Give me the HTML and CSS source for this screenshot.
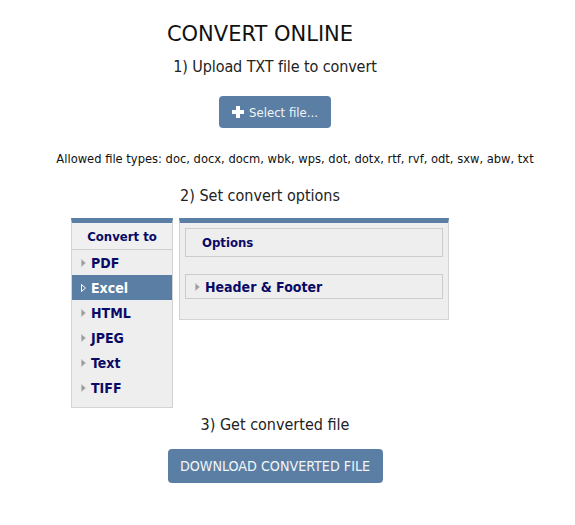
FILE: index.html
```html
<!DOCTYPE html>
<html>
<head>
<meta charset="utf-8">
<link rel="stylesheet" href="styles.css">
</head>
<body>
<main class="page">
  <h1 class="title">CONVERT ONLINE</h1>
  <p class="step step-1">1) Upload TXT file to convert</p>
  <button class="btn btn-select"><span class="plus"></span>Select file...</button>
  <p class="allowed">Allowed file types: doc, docx, docm, wbk, wps, dot, dotx, rtf, rvf, odt, sxw, abw, txt</p>
  <p class="step step-2">2) Set convert options</p>
  <section class="converter">
    <div class="panel formats">
      <div class="panel-head">Convert to</div>
      <ul class="format-list">
        <li class="format"><svg class="arrow" viewBox="0 0 5 8"><polygon points="0.5,0.5 4.5,4 0.5,7.5"/></svg>PDF</li>
        <li class="format active"><svg class="arrow" viewBox="0 0 5 8"><polygon points="0.5,0.5 4.5,4 0.5,7.5"/></svg>Excel</li>
        <li class="format"><svg class="arrow" viewBox="0 0 5 8"><polygon points="0.5,0.5 4.5,4 0.5,7.5"/></svg>HTML</li>
        <li class="format"><svg class="arrow" viewBox="0 0 5 8"><polygon points="0.5,0.5 4.5,4 0.5,7.5"/></svg>JPEG</li>
        <li class="format"><svg class="arrow" viewBox="0 0 5 8"><polygon points="0.5,0.5 4.5,4 0.5,7.5"/></svg>Text</li>
        <li class="format"><svg class="arrow" viewBox="0 0 5 8"><polygon points="0.5,0.5 4.5,4 0.5,7.5"/></svg>TIFF</li>
      </ul>
    </div>
    <div class="panel options">
      <div class="options-head">Options</div>
      <div class="options-group"><svg class="arrow" viewBox="0 0 5 8"><polygon points="0.5,0.5 4.5,4 0.5,7.5"/></svg>Header &amp; Footer</div>
    </div>
  </section>
  <p class="step step-3">3) Get converted file</p>
  <button class="btn btn-download">DOWNLOAD CONVERTED FILE</button>
</main>
</body>
</html>
```

FILE: styles.css
```css
html, body {
  margin: 0;
  padding: 0;
  background: #ffffff;
}
body {
  font-family: "DejaVu Sans", sans-serif;
  font-stretch: condensed;
  color: #111111;
}
.page {
  width: 575px;
  display: flex;
  flex-direction: column;
  align-items: center;
}
.title {
  margin: 21px 55px 0 0;
  font-size: 21px;
  font-stretch: normal;
  font-weight: normal;
  line-height: 26px;
  color: #111;
}
.step {
  margin: 0;
  font-size: 16px;
  line-height: 20px;
  color: #222;
}
.step-1 {
  margin: 10px 25px 0 0;
  letter-spacing: -0.1px;
}
.btn {
  font-family: inherit;
  font-stretch: condensed;
  border: none;
  border-radius: 4px;
  background: #5b7fa4;
  color: #f2f5f8;
  display: flex;
  align-items: center;
  justify-content: center;
  padding: 0;
}
.btn-select {
  margin: 19px 25px 0 0;
  width: 112px;
  height: 32px;
  font-size: 13px;
  gap: 5px;
}
.plus {
  position: relative;
  width: 12px;
  height: 12px;
}
.plus::before, .plus::after {
  content: "";
  position: absolute;
  background: #ffffff;
}
.plus::before { left: 0; top: 4px; width: 12px; height: 4px; }
.plus::after { left: 4px; top: 0; width: 4px; height: 12px; }
.allowed {
  margin: 23px 0 0 15px;
  font-size: 12.8px;
  line-height: 16px;
  color: #111;
}
.step-2 {
  margin: 19px 55px 0 0;
  letter-spacing: 0;
}
.converter {
  margin: 12px 0 0 71px;
  align-self: flex-start;
  display: flex;
  align-items: flex-start;
  gap: 6px;
}
.panel {
  background: #eeeeee;
  border: 1px solid #d3d3d3;
  border-top: 5px solid #5b7fa4;
  box-sizing: border-box;
}
.formats {
  width: 102px;
  height: 190px;
}
.panel-head {
  height: 27px;
  box-sizing: border-box;
  border-bottom: 1px solid #cfcfcf;
  background: #f0f0f0;
  text-align: center;
  font-size: 13px;
  font-weight: bold;
  line-height: 27px;
  color: #0a0a66;
}
.format-list {
  list-style: none;
  margin: 0;
  padding: 0;
}
.format {
  height: 25px;
  display: flex;
  align-items: center;
  padding-left: 9px;
  font-size: 14px;
  font-weight: bold;
  color: #0a0a66;
}
.format.active {
  background: #5b7fa4;
  color: #ffffff;
}
.arrow {
  width: 5px;
  height: 8px;
  margin-right: 5px;
  flex: none;
}
.arrow polygon {
  fill: #999999;
  stroke: #bbbbbb;
  stroke-width: 0.6;
}
.format.active .arrow polygon {
  fill: none;
  stroke: #ffffff;
  stroke-width: 1;
}
.options {
  width: 270px;
  height: 102px;
  padding: 5px 5px 0 5px;
}
.options-head {
  height: 29px;
  box-sizing: border-box;
  border: 1px solid #cccccc;
  padding-left: 16px;
  font-size: 13px;
  font-weight: bold;
  line-height: 27px;
  color: #0a0a66;
}
.options-group {
  margin-top: 17px;
  height: 25px;
  box-sizing: border-box;
  border: 1px solid #cccccc;
  padding-left: 9px;
  display: flex;
  align-items: center;
  font-size: 14px;
  font-weight: bold;
  color: #0a0a66;
}
.step-3 { margin: 7px 25px 0 0; }
.btn-download {
  margin: 14px 25px 0 0;
  width: 215px;
  height: 34px;
  font-size: 14.2px;
}
```
